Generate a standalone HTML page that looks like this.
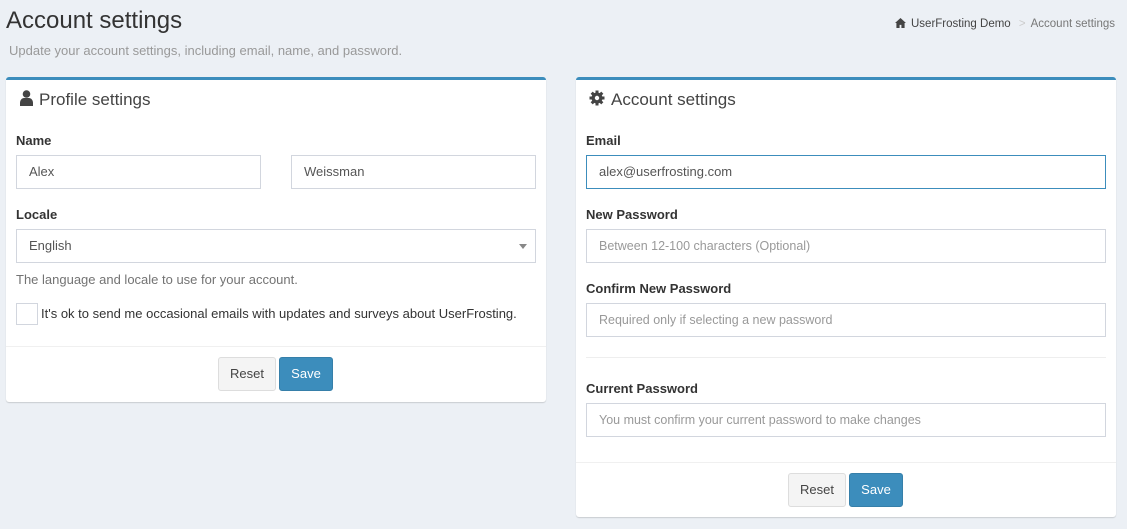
<html><head><style>
body{margin:0;width:1127px;height:529px;background:#ecf0f5;font-family:"Liberation Sans",sans-serif;color:#333;position:relative;overflow:hidden}
.a{position:absolute}
.box{position:absolute;background:#fff;border-top:3px solid #3c8dbc;border-radius:3px;box-shadow:0 1px 1px rgba(0,0,0,.15)}
.lbl{position:absolute;font-weight:bold;font-size:13px;color:#333}
.in{position:absolute;box-sizing:border-box;height:34px;border:1px solid #d2d6de;font-size:13px;padding:0 12px;line-height:32px;color:#555;background:#fff}
.ph{color:#999}
.btn{position:absolute;box-sizing:border-box;height:34px;font-size:13px;line-height:32px;text-align:center;border-radius:3px}
.rs{background:#f4f4f4;border:1px solid #ddd;color:#444}
.sv{background:#3c8dbc;border:1px solid #367fa9;color:#fff}
.hr{position:absolute;height:1px;background:#f0f0f0}
.t{position:absolute;font-size:17px;color:#444}
</style></head><body>
<div class="a" style="left:6px;top:7px;font-size:24px;color:#333">Account settings</div>
<div class="a" style="left:9px;top:43px;font-size:13px;color:#999">Update your account settings, including email, name, and password.</div>
<div class="a" style="right:12px;top:18px;font-size:11.5px;color:#444"><svg width="11" height="10" viewBox="0 0 12 11" style="vertical-align:-1px;margin-right:5px"><path d="M6 0L0 5.5h1.5V11h3.5V7.5h2V11h3.5V5.5H12z" fill="#444"/></svg>UserFrosting Demo <span style="color:#ccc;margin:0 5px">&gt;</span><span style="color:#777">Account settings</span></div>

<div class="box" style="left:6px;top:77px;width:540px;height:322px">
<div class="t" style="left:14px;top:10px"><svg width="13" height="16" viewBox="0 0 13 16" style="vertical-align:-1px;margin-right:6px"><circle cx="6.5" cy="4" r="3.8" fill="#444"/><path d="M0 16v-3c0-3 2-5 4-5h5c2 0 4 2 4 5v3z" fill="#444"/></svg>Profile settings</div>
<div class="lbl" style="left:10px;top:53px">Name</div>
<div class="in" style="left:10px;top:75px;width:245px">Alex</div>
<div class="in" style="left:285px;top:75px;width:245px">Weissman</div>
<div class="lbl" style="left:10px;top:127px">Locale</div>
<div class="in" style="left:10px;top:149px;width:520px">English<span style="position:absolute;right:8px;top:14px;border:4.5px solid transparent;border-top:5px solid #888;border-bottom:0"></span></div>
<div class="a" style="left:10px;top:192px;font-size:13px;color:#737373">The language and locale to use for your account.</div>
<div class="a" style="left:10px;top:223px;width:20px;height:20px;border:1px solid #d2d6de"></div>
<div class="a" style="left:35px;top:226px;font-size:13px;color:#333">It's ok to send me occasional emails with updates and surveys about UserFrosting.</div>
<div class="hr" style="left:0;top:266px;width:540px"></div>
<div class="btn rs" style="left:212px;top:277px;width:58px">Reset</div>
<div class="btn sv" style="left:273px;top:277px;width:54px">Save</div>
</div>

<div class="box" style="left:576px;top:77px;width:540px;height:437px">
<div class="t" style="left:13px;top:10px"><svg width="16" height="16" viewBox="0 0 16 16" style="vertical-align:-1px;margin-right:6px"><g fill="#444"><circle cx="8" cy="8" r="5.5"/><g stroke="#444" stroke-width="3"><path d="M8 0.5v15M0.5 8h15M2.7 2.7l10.6 10.6M13.3 2.7L2.7 13.3"/></g></g><circle cx="8" cy="8" r="2.2" fill="#fff"/></svg>Account settings</div>
<div class="lbl" style="left:10px;top:53px">Email</div>
<div class="in" style="left:10px;top:75px;width:520px;border-color:#3c8dbc">alex@userfrosting.com</div>
<div class="lbl" style="left:10px;top:127px">New Password</div>
<div class="in ph" style="left:10px;top:149px;width:520px;font-size:12.5px">Between 12-100 characters (Optional)</div>
<div class="lbl" style="left:10px;top:201px">Confirm New Password</div>
<div class="in ph" style="left:10px;top:223px;width:520px;font-size:12.5px">Required only if selecting a new password</div>
<div class="hr" style="left:10px;top:277px;width:520px;background:#eee"></div>
<div class="lbl" style="left:10px;top:301px">Current Password</div>
<div class="in ph" style="left:10px;top:323px;width:520px;font-size:12.5px">You must confirm your current password to make changes</div>
<div class="hr" style="left:0;top:382px;width:540px"></div>
<div class="btn rs" style="left:212px;top:393px;width:58px">Reset</div>
<div class="btn sv" style="left:273px;top:393px;width:54px">Save</div>
</div>
</body></html>
